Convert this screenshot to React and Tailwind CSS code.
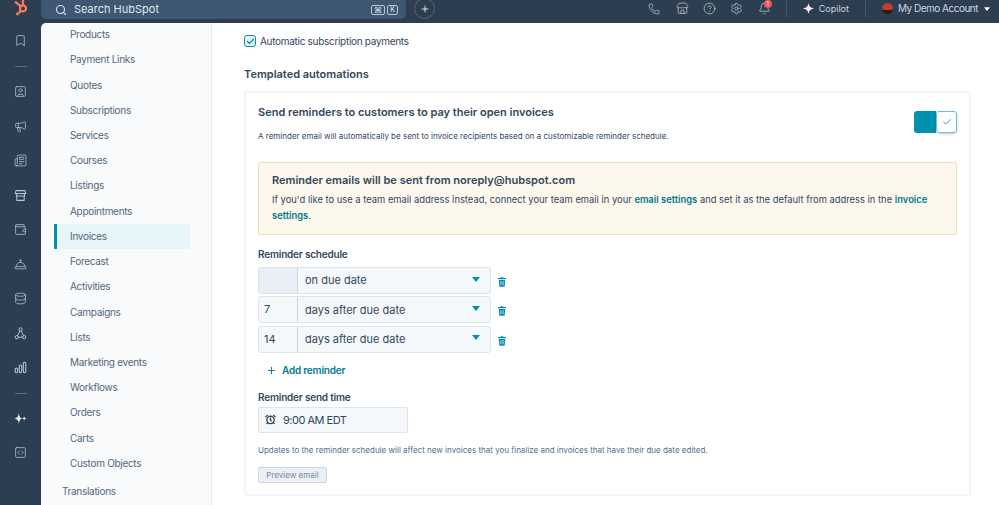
import React from "react";
import { Search, Plus, Phone, Store, CircleHelp, Settings, Bell, Bookmark, SquareUser, Megaphone, Newspaper, Wallet, ConciergeBell, Database, SquareCode, Check, AlarmClock } from "lucide-react";

const navItems = ["Products","Payment Links","Quotes","Subscriptions","Services","Courses","Listings","Appointments","Invoices","Forecast","Activities","Campaigns","Lists","Marketing events","Workflows","Orders","Carts","Custom Objects"];

function Spark({ className }) {
  return (
    <svg viewBox="0 0 16 16" className={className} fill="currentColor">
      <path d="M8 0c.6 4.400 2.600 7 8 8-5.400 1-7.400 3.600-8 8-.6-4.400-2.600-7-8-8 5.400-1 7.400-3.600 8-8z" />
    </svg>
  );
}

function Basket({ className }) {
  return (
    <svg viewBox="0 0 16 16" className={className} fill="none" stroke="currentColor" strokeWidth="1.300">
      <path d="M2.500 2h11l1 3.500h-13zM3 5.500h10v3H3zM3.500 8.500h9V14h-9z" strokeLinejoin="round" />
    </svg>
  );
}

function Network({ className }) {
  return (
    <svg viewBox="0 0 16 16" className={className} fill="none" stroke="currentColor" strokeWidth="1.200">
      <circle cx="8" cy="3" r="2" /><circle cx="3.500" cy="12.500" r="2" /><circle cx="12.500" cy="12.500" r="2" />
      <path d="M7 5 4.500 10.700M9 5l2.500 5.700M5.500 12.500h5" />
    </svg>
  );
}

function Bars({ className }) {
  return (
    <svg viewBox="0 0 16 16" className={className} fill="none" stroke="currentColor" strokeWidth="1.300">
      <rect x="1.500" y="8.500" width="3" height="6" rx="1.500" /><rect x="6.500" y="5" width="3" height="9.500" rx="1.500" /><rect x="11.500" y="1.500" width="3" height="13" rx="1.500" />
    </svg>
  );
}

function Breeze({ className }) {
  return (
    <svg viewBox="0 0 16 16" className={className} fill="currentColor">
      <path d="M6 1c.3 4 1.200 6 3.700 7C7.200 9 6.300 11 6 15c-.3-4-1.500-6-5.500-7C4.500 7 5.700 5 6 1zM12.500 5c.2 1.800.8 2.600 3 3-2.200.4-2.800 1.200-3 3-.2-1.800-.8-2.600-2.500-3 1.700-.4 2.300-1.200 2.500-3z" />
    </svg>
  );
}

function Sprocket() {
  return (
    <svg viewBox="0 0 20 20" className="w-[16px] h-[16px] text-[#ff7a59]" fill="none" stroke="currentColor" strokeWidth="2.800">
      <circle cx="12.500" cy="10.500" r="3.800" />
      <path d="M12.500 6V0M2.500 2l7.500 6M9.800 13.500l-3 3" />
      <circle cx="5.500" cy="17.500" r="1.800" fill="currentColor" stroke="none" />
    </svg>
  );
}

function Trash() {
  return (
    <svg viewBox="0 0 10 12" className="w-[8px] h-[10px] ml-[7px] mt-[3px] text-[#0091ae]" fill="currentColor">
      <path d="M3.500 0h3l.5 1h3v1.500H0V1h3zM1 3.500h8L8.300 12H1.700z" />
      <path d="M3.300 5v5M5 5v5M6.700 5v5" stroke="#ffffff" strokeWidth=".6" />
    </svg>
  );
}

function Row({ value, label, disabled }) {
  return (
    <div className="flex items-center">
      <div className="flex w-[233px] h-[27px] rounded-[3px] border border-[#dfe3eb] bg-[#f5f8fa] overflow-hidden">
        <div className={`w-[39px] shrink-0 border-r border-[#cbd6e2] px-[5px] text-[11px] leading-[25px] text-[#33475b] ${disabled ? "bg-[#e9eff6]" : ""}`}>{value}</div>
        <div className="flex-1 flex items-center justify-between pl-[7px] pr-[10px] text-[11px] text-[#33475b]">
          <span>{label}</span>
          <svg viewBox="0 0 8 5" className="w-[8px] h-[5px] text-[#0091ae] mb-[3px]" fill="currentColor"><path d="M0 0h8L4 5z" /></svg>
        </div>
      </div>
      <Trash />
    </div>
  );
}

export default function App() {
  return (
    <div className="w-[999px] h-[505px] overflow-hidden flex flex-col bg-[#2c3e52] text-[#33475b] font-['Inter','Liberation_Sans',sans-serif]">
      <header className="h-[23px] shrink-0 flex items-start bg-[#2d3e50]">
        <div className="w-[41px] shrink-0 pl-[13px]"><Sprocket /></div>
        <div className="w-[365px] h-[19px] rounded-b-[5px] bg-[#3f5771] flex items-center pl-[14px] pr-[8px] text-[#dfe7ef]">
          <Search className="w-[12px] h-[12px] mr-[7px]" strokeWidth={2.200} />
          <span className="text-[11px] flex-1">Search HubSpot</span>
          <span className="w-[14px] h-[10px] mr-[2px] border border-[#b9c6d4] rounded-[2px] text-[8px] leading-[8px] text-center">⌘</span>
          <span className="w-[11px] h-[10px] border border-[#b9c6d4] rounded-[2px] text-[7px] leading-[8px] text-center">K</span>
        </div>
        <div className="ml-[8px] w-[21px] h-[21px] rounded-full border border-[#52677d] flex items-center justify-center text-white -mt-[2px]">
          <Plus className="w-[10px] h-[10px]" />
        </div>
        <div className="flex-1 flex items-center justify-end h-[17px] text-[#cbd6e2]">
          <Phone className="w-[12px] h-[12px]" strokeWidth={1.300} />
          <Store className="w-[13px] h-[13px] ml-[16px]" strokeWidth={1.300} />
          <CircleHelp className="w-[13px] h-[13px] ml-[14px]" strokeWidth={1.300} />
          <Settings className="w-[13px] h-[13px] ml-[14px]" strokeWidth={1.300} />
          <div className="relative ml-[15px]">
            <Bell className="w-[13px] h-[13px]" strokeWidth={1.300} />
            <span className="absolute -top-[2px] left-[6px] w-[8px] h-[8px] rounded-full bg-[#f2545b] text-white text-[6px] leading-[8px] text-center">1</span>
          </div>
          <div className="w-px h-[16px] bg-[#44586c] ml-[15px]" />
          <Spark className="w-[11px] h-[11px] ml-[16px] text-[#fde7f7]" />
          <span className="text-[9px] ml-[5px]">Copilot</span>
          <div className="w-px h-[16px] bg-[#44586c] ml-[16px]" />
          <span className="w-[11px] h-[11px] ml-[16px] rounded-full bg-[#c1402f] border-b-[4px] border-[#2b1a18]" />
          <span className="text-[10px] ml-[5px] tracking-[-0.5px]">My Demo Account</span>
          <svg viewBox="0 0 8 5" className="w-[6px] h-[4px] ml-[6px] mr-[9px] text-white" fill="currentColor"><path d="M0 0h8L4 5z" /></svg>
        </div>
      </header>

      <div className="flex-1 flex min-h-0">
        <aside className="w-[41px] shrink-0 flex flex-col items-center text-[#b9c8d8]">
          <Bookmark className="w-[13px] h-[13px] mt-[11px]" strokeWidth={1.400} />
          <div className="w-[12px] h-px bg-[#5a6e82] mt-[19px]" />
          <SquareUser className="w-[13px] h-[13px] mt-[18px]" strokeWidth={1.400} />
          <Megaphone className="w-[13px] h-[13px] mt-[22px]" strokeWidth={1.400} />
          <Newspaper className="w-[13px] h-[13px] mt-[21px]" strokeWidth={1.400} />
          <Basket className="w-[13px] h-[13px] mt-[22px]" />
          <Wallet className="w-[13px] h-[13px] mt-[21px]" strokeWidth={1.400} />
          <ConciergeBell className="w-[13px] h-[13px] mt-[22px]" strokeWidth={1.400} />
          <Database className="w-[13px] h-[13px] mt-[21px]" strokeWidth={1.400} />
          <Network className="w-[13px] h-[13px] mt-[22px]" />
          <Bars className="w-[13px] h-[13px] mt-[21px]" />
          <div className="w-[12px] h-px bg-[#5a6e82] mt-[19px]" />
          <Breeze className="w-[13px] h-[13px] mt-[18px] text-[#e6edf4]" />
          <SquareCode className="w-[13px] h-[13px] mt-[21px]" strokeWidth={1.400} />
        </aside>

        <nav className="w-[171px] shrink-0 rounded-tl-[5px] bg-[#f8fafc] border-r border-[#e8edf2] text-[10px] tracking-[-0.3px] text-[#55687b] overflow-hidden">
          <ul className="-mt-[1px] ml-[13px] mr-[21px]">
            {navItems.map((n) => (
              <li key={n} className={`h-[25.230px] flex items-center pl-[16px] ${n === "Invoices" ? "bg-[#e5f5f8] border-l-[3px] border-[#0091ae] !pl-[13px]" : ""}`}>{n}</li>
            ))}
          </ul>
          <div className="ml-[21px] mt-[3px] leading-[25px]">Translations</div>
        </nav>

        <main className="flex-1 bg-white pl-[32px] pr-[28px] min-w-0">
          <label className="flex items-center h-[12px] mt-[12px] text-[10px]">
            <span className="w-[12px] h-[12px] rounded-[3px] bg-[#e5f5f8] border border-[#0091ae] flex items-center justify-center">
              <Check className="w-[9px] h-[9px] text-[#0091ae]" strokeWidth={3.500} />
            </span>
            <span className="ml-[4px] tracking-[-0.3px]">Automatic subscription payments</span>
          </label>
          <h2 className="mt-[20px] text-[11px] leading-[14px] font-semibold">Templated automations</h2>
          <section className="mt-[10px] border-2 border-[#f2f5f8] rounded-[2px] pl-[12px] pr-[12px] h-[405px]">
            <div className="flex justify-between">
              <div>
                <h3 className="mt-[11px] text-[11px] leading-[16px] font-semibold">Send reminders to customers to pay their open invoices</h3>
                <p className="mt-[10px] text-[8px] leading-[12px]">A reminder email will automatically be sent to invoice recipients based on a customizable reminder schedule.</p>
              </div>
              <div className="mt-[18px] w-[43px] h-[22px] flex rounded-[3px]">
                <span className="w-[22px] bg-[#0091ae] rounded-l-[3px]" />
                <span className="flex-1 bg-white border border-[#6fbccb] rounded-[3px] shadow-[0_1px_3px_rgba(0,0,0,0.2)] flex items-center justify-center"><Check className="w-[10px] h-[10px] text-[#2c7a8c]" strokeWidth={2} /></span>
              </div>
            </div>
            <div className="mt-[20px] h-[73px] bg-[#fdf8ee] border border-[#f8dcae] rounded-[2px] px-[13px] pt-[9px]">
              <h4 className="text-[11px] leading-[16px] font-semibold">Reminder emails will be sent from noreply@hubspot.com</h4>
              <p className="mt-[4px] text-[9.4px] leading-[16px]">If you'd like to use a team email address instead, connect your team email in your <a className="font-semibold text-[#007a8c]">email settings</a> and set it as the default from address in the <a className="font-semibold text-[#007a8c]">invoice</a> <a className="font-semibold text-[#007a8c]">settings</a>.</p>
            </div>
            <h5 className="mt-[12px] text-[10px] leading-[14px] font-semibold tracking-[-0.2px]">Reminder schedule</h5>
            <div className="mt-[6px] flex flex-col gap-[2.400px]">
              <Row value="" label="on due date" disabled />
              <Row value="7" label="days after due date" />
              <Row value="14" label="days after due date" />
            </div>
            <button className="mt-[11px] ml-[8px] flex items-center h-[14px] text-[10px] font-semibold tracking-[-0.2px] text-[#007a8c]">
              <Plus className="w-[11px] h-[11px] mr-[5px]" strokeWidth={2} />Add reminder
            </button>
            <h5 className="mt-[12px] text-[10px] leading-[14px] font-semibold tracking-[-0.2px]">Reminder send time</h5>
            <div className="mt-[3px] w-[150px] h-[26px] bg-[#f5f8fa] border border-[#dfe3eb] rounded-[2px] flex items-center pl-[6px] text-[11px] tracking-[-0.5px]">
              <AlarmClock className="w-[11px] h-[11px] mr-[7px]" strokeWidth={3} />9:00 AM EDT
            </div>
            <p className="mt-[11px] text-[8px] leading-[12px] text-[#516f90]">Updates to the reminder schedule will affect new invoices that you finalize and invoices that have their due date edited.</p>
            <button className="mt-[11px] block w-[69px] h-[16px] bg-[#eaf0f6] border border-[#cbd6e2] rounded-[2px] text-[8px] text-[#7c8a99]">Preview email</button>
          </section>
        </main>
      </div>
    </div>
  );
}
